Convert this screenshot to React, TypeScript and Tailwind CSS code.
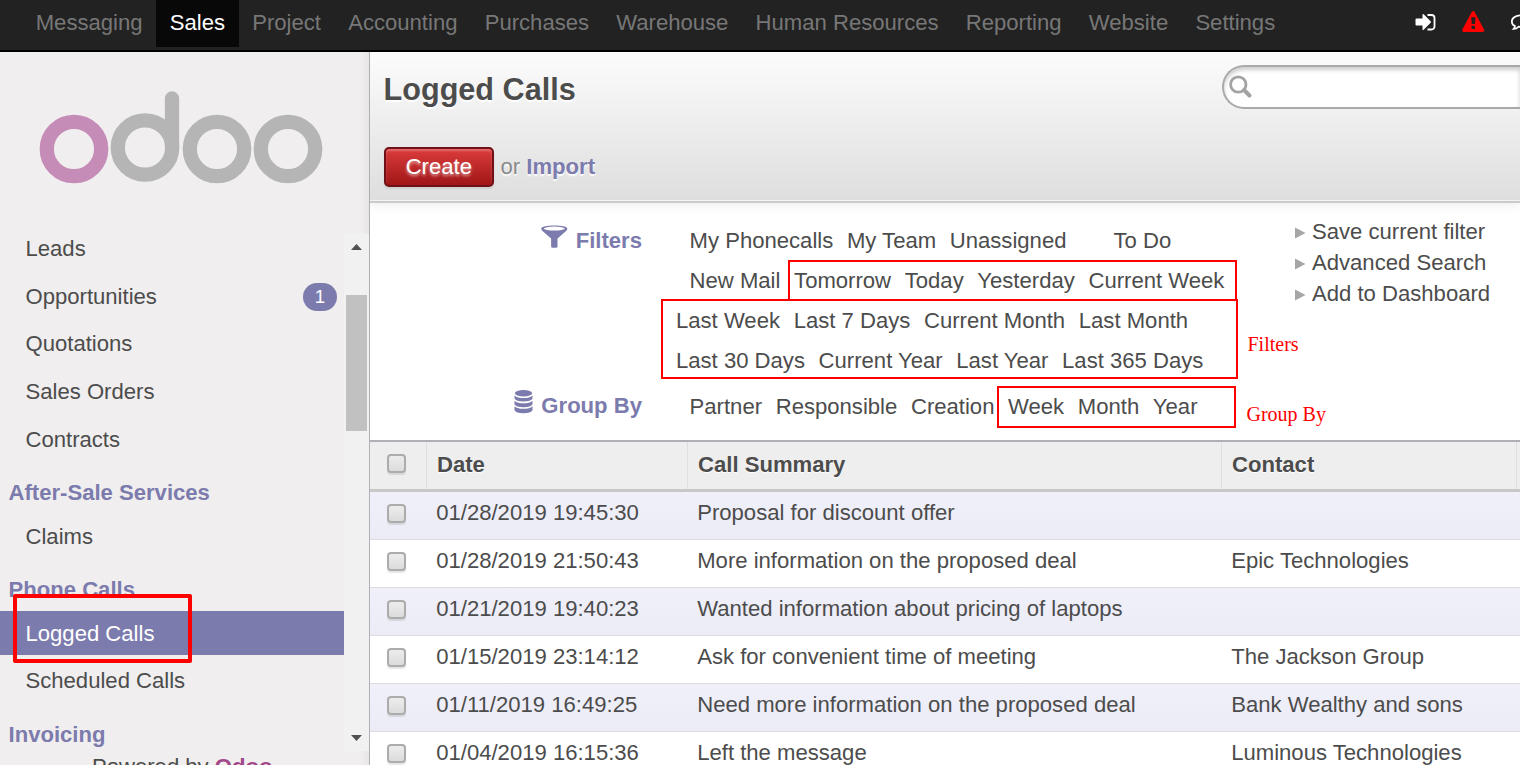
import React from "react";

const modules = [
  "Messaging", "Sales", "Project", "Accounting", "Purchases", "Warehouse",
  "Human Resources", "Reporting", "Website", "Settings",
];

type MenuEntry = { label: string; heading?: boolean; badge?: number; active?: boolean };

const menu: MenuEntry[] = [
  { label: "Leads" },
  { label: "Opportunities", badge: 1 },
  { label: "Quotations" },
  { label: "Sales Orders" },
  { label: "Contracts" },
  { label: "After-Sale Services", heading: true },
  { label: "Claims" },
  { label: "Phone Calls", heading: true },
  { label: "Logged Calls", active: true },
  { label: "Scheduled Calls" },
  { label: "Invoicing", heading: true },
];

const calls = [
  ["01/28/2019 19:45:30", "Proposal for discount offer", ""],
  ["01/28/2019 21:50:43", "More information on the proposed deal", "Epic Technologies"],
  ["01/21/2019 19:40:23", "Wanted information about pricing of laptops", ""],
  ["01/15/2019 23:14:12", "Ask for convenient time of meeting", "The Jackson Group"],
  ["01/11/2019 16:49:25", "Need more information on the proposed deal", "Bank Wealthy and sons"],
  ["01/04/2019 16:15:36", "Left the message", "Luminous Technologies"],
];

function TopBar() {
  return (
    <header className="flex h-[52px] shrink-0 items-start border-b-2 border-black bg-[#222] pl-[22.1px] text-[#777]">
      {modules.map((m) => (
        <a
          key={m}
          className={
            m === "Sales"
              ? "h-[47px] bg-[#080808] px-[13.6px] leading-[45px] text-white"
              : "h-[47px] px-[13.6px] leading-[45px]"
          }
        >
          {m}
        </a>
      ))}
      <div className="ml-auto flex h-[44px] w-[106px] items-center overflow-hidden">
        <svg className="h-[44px] w-[106px]" viewBox="1414 0 106 44">
          <path d="M1416.500 18.500h6v-3.800q.1-1.300 1.200-.5l6.900 7q.9.800 0 1.600l-6.900 7q-1.100.9-1.200-.5v-3.800h-6q-1 0-1-1v-5q0-1 1-1z" fill="#fff" />
          <path d="M1427.500 15h4a3 3 0 0 1 3 3v8.500a3 3 0 0 1-3 3h-4" fill="none" stroke="#fff" strokeWidth="1.800" />
          <path d="M1471.700 12q1.500-2.200 3 0l9.300 17.400q.8 2.300-1.500 2.600h-18.600q-2.300-.3-1.500-2.600z" fill="#f00" />
          <path d="M1471.200 17.200h4.300l-.5 6.800h-3.300zM1471.600 25.700h3.400v3.200h-3.400z" fill="#222" />
          <path d="M1522 15.200c-6 0-10.200 2.700-10.200 6.200 0 2 1.300 3.700 3.200 4.700 0 1.200-.6 2-1.500 2.900 2 0 3.700-.8 5-2.300 1 .2 2 .3 3.500.3" fill="none" stroke="#fff" strokeWidth="1.700" />
        </svg>
      </div>
    </header>
  );
}

function Logo() {
  return (
    <svg className="h-[174px] w-full shrink-0" viewBox="0 52 369 174" fill="none" strokeWidth="14.300" stroke="#b5b5b5">
      <circle cx="74" cy="149" r="27.200" stroke="#c48cb6" />
      <circle cx="145" cy="147.500" r="27.200" />
      <path d="M172 148V98.500" strokeLinecap="round" />
      <circle cx="217" cy="149" r="27.200" />
      <circle cx="288" cy="149" r="27.200" />
    </svg>
  );
}

function Sidebar() {
  return (
    <aside className="relative flex w-[370px] shrink-0 flex-col overflow-hidden border-r border-[#afafb6] bg-[#f0eeee] shadow-[inset_-8px_0_8px_-6px_rgba(0,0,0,0.06)]">
      <Logo />
      <div className="flex h-[526px] shrink-0">
        <nav className="h-full w-[344px] overflow-hidden pt-[0.7px]">
          {menu.map((e) =>
            e.heading ? (
              <h3 key={e.label} className="h-[49.55px] pl-[8.5px] pt-[6.1px] font-bold leading-[44px] text-[#7c7bad]">
                {e.label}
              </h3>
            ) : (
              <div key={e.label} className="h-[47.6px]">
                <a
                  className={
                    e.active
                      ? "flex h-[44px] items-center justify-between bg-[#7c7bad] pl-[25.5px] pr-[7px] pt-[0.2px] text-white"
                      : "flex h-[44px] items-center justify-between pl-[25.5px] pr-[7px] pt-[0.2px]"
                  }
                >
                  {e.label}
                  {e.badge && (
                    <span className="mt-px flex h-7 w-[34px] items-center justify-center rounded-[14px] bg-[#7c7bad] text-[18.7px] text-white">
                      {e.badge}
                    </span>
                  )}
                </a>
              </div>
            ),
          )}
        </nav>
        <div className="mt-2 flex h-[517px] w-[25px] flex-col items-center bg-[#f1f1f1]">
          <svg className="h-[61px] w-[11px] shrink-0" viewBox="0 0 11 61">
            <path d="M0 16l5.500-6L11 16z" fill="#505050" />
          </svg>
          <div className="h-[136px] w-[21px] shrink-0 bg-[#c1c1c1]" />
          <svg className="mt-auto h-[20px] w-[11px] shrink-0" viewBox="0 0 11 20">
            <path d="M0 4l5.500 6L11 4z" fill="#505050" />
          </svg>
        </div>
      </div>
      <footer className="pl-[92px] leading-[30px]">
        Powered by <b className="text-[#a24689]">Odoo</b>
      </footer>
      <div className="absolute left-[13px] top-[542px] h-[69px] w-[179px] rounded-[2px] border-4 border-[#f00]" />
    </aside>
  );
}

function ControlPanel() {
  return (
    <section className="relative z-10 flex h-[151px] shrink-0 justify-between border-b-2 border-[#cacaca] bg-gradient-to-b from-[#fcfcfc] to-[#dedede] shadow-[inset_0_-1px_0_#f2f2f2,0_2px_10px_rgba(0,0,0,0.08)] [text-shadow:0_1.7px_1.7px_#fff]">
      <div className="flex flex-col pl-[13.6px]">
        <h1 className="pt-[13px] text-[30.6px] font-bold leading-[48px]">Logged Calls</h1>
        <div className="mt-[34px] flex h-[40px] items-center text-[#8a8a8a]">
          <button className="h-[40px] w-[110.4px] rounded-[5px] border-2 border-[#6f1116] bg-gradient-to-b from-[#dc3b3b] to-[#a01517] pb-px text-white shadow-[inset_0_2px_2px_rgba(255,255,255,0.25),0_2px_2px_rgba(0,0,0,0.08)] [text-shadow:0_2px_3px_rgba(255,255,255,0.6)]">
            Create
          </button>
          <span className="whitespace-pre pl-[6.500px]">or <b className="text-[#7c7bad]">Import</b></span>
        </div>
      </div>
      <div className="mt-[13px] h-[44px] w-[298px] rounded-l-[22px] border-2 border-r-0 border-[#a9a9a9] bg-white shadow-[inset_0_3px_4px_rgba(0,0,0,0.2)]">
        <svg className="ml-[4px] mt-[7px] h-[26px] w-[26px]" viewBox="0 0 26 26" fill="none" stroke="#a3a3a3">
          <circle cx="10.300" cy="10.500" r="7.700" strokeWidth="2.800" />
          <path d="M16 16l5.500 5.500" strokeWidth="4" strokeLinecap="round" />
        </svg>
      </div>
    </section>
  );
}

function FilterRow({ items, className = "" }: { items: string[]; className?: string }) {
  return (
    <div className={`flex h-10 items-center gap-[13.65px] whitespace-nowrap ${className}`}>
      {items.map((i) => <span key={i}>{i}</span>)}
    </div>
  );
}

function SearchDrawer() {
  return (
    <section className="relative flex h-[237px] shrink-0 bg-white pt-[18px]">
      <div className="flex w-[272px] shrink-0 flex-col items-end font-bold text-[#7c7bad]">
        <div className="flex h-[165px] items-start leading-[40px]">
          <svg className="mr-[8px] mt-[4px] h-[24px] w-[27px]" viewBox="0 0 27 24">
            <path d="M.3 3.500C.3 1.400 6 .4 13.300.4s13 1 13 3.100c0 1.200-.5 1.800-1.500 2.700l-8.300 7.400v7.900q0 1.200-1.500 1.200h-3.400q-1.500 0-1.500-1.200v-7.900L1.800 6.200C.8 5.300.3 4.700.3 3.500z" fill="#7c7bad" />
            <ellipse cx="13.300" cy="3.600" rx="10.500" ry="2" fill="#fff" />
          </svg>
          Filters
        </div>
        <div className="flex h-10 items-start leading-[40px]">
          <svg className="mr-[8px] mt-[3px] h-[26px] w-[19px]" viewBox="0 0 19 26" fill="#7c7bad">
            <ellipse cx="9.500" cy="4.300" rx="8.700" ry="3.200" />
            <path d="M.5 6.500q3 2.600 9 2.600t9-2.600v3q-1.500 3-9 3t-9-3z" />
            <path d="M.5 11.700q3 2.600 9 2.600t9-2.600v3.500q-1.500 3-9 3t-9-3z" />
            <path d="M.5 17.200q3 2.600 9 2.600t9-2.600v4q-1.500 3-9 3t-9-3z" />
          </svg>
          Group By
        </div>
      </div>
      <div className="w-[653px] shrink-0 pl-[34px]">
        <div className="flex gap-[47px] pl-[13.6px]">
          <FilterRow items={["My Phonecalls", "My Team", "Unassigned"]} />
          <FilterRow items={["To Do"]} />
        </div>
        <FilterRow className="pl-[13.6px]" items={["New Mail", "Tomorrow", "Today", "Yesterday", "Current Week"]} />
        <FilterRow items={["Last Week", "Last 7 Days", "Current Month", "Last Month"]} />
        <FilterRow items={["Last 30 Days", "Current Year", "Last Year", "Last 365 Days"]} />
        <FilterRow className="mt-[6px] pl-[13.6px]" items={["Partner", "Responsible", "Creation", "Week", "Month", "Year"]} />
      </div>
      <ul className="-mt-[5px]">
        {["Save current filter", "Advanced Search", "Add to Dashboard"].map((t) => (
          <li key={t} className="flex h-[31px] items-center whitespace-nowrap">
            <svg className="mr-[6.500px] mt-[3px] h-[12px] w-[10.500px]" viewBox="0 0 10.500 12">
              <path d="M0 .5l10.500 5.500L0 11.500z" fill="#a6a6a6" />
            </svg>
            {t}
          </li>
        ))}
      </ul>
      <div className="absolute left-[418px] top-[57px] h-[41px] w-[449px] border-2 border-[#f00]" />
      <div className="absolute left-[291px] top-[96px] h-[80px] w-[577px] border-2 border-[#f00]" />
      <div className="absolute left-[627px] top-[183px] h-[42px] w-[239px] border-2 border-[#f00]" />
      <div className="absolute left-[877.5px] top-[129px] font-['Liberation_Serif',serif] text-[20px] leading-6 text-[#f00]">Filters</div>
      <div className="absolute left-[876.5px] top-[199px] font-['Liberation_Serif',serif] text-[20px] leading-6 text-[#f00]">Group By</div>
    </section>
  );
}

function Check() {
  return (
    <span className="block h-[19px] w-[19px] rounded-[4px] border-2 border-[#acacac] bg-gradient-to-b from-[#ececec] to-[#dcdcdc] shadow-[0_1.500px_1px_rgba(0,0,0,0.1)]" />
  );
}

function CallsTable() {
  const cols = "grid grid-cols-[57px_261px_534px_295px_1fr]";
  return (
    <section className="whitespace-nowrap">
      <div className={`${cols} h-[52px] border-b-[3px] border-t-2 border-b-[#c8c8c8] border-t-[#afafb6] bg-[#eee] font-bold leading-[45px] [text-shadow:0_1px_1px_#fff]`}>
        <div className="border-r border-[#dfdfdf] pl-[17px] pt-[12px]"><Check /></div>
        <div className="border-r border-[#dfdfdf] pl-[10px]">Date</div>
        <div className="border-r border-[#dfdfdf] pl-[10px]">Call Summary</div>
        <div className="border-r border-[#dfdfdf] pl-[10px]">Contact</div>
      </div>
      {calls.map(([date, summary, contact]) => (
        <div
          key={date}
          className={`${cols} h-12 border-b border-[#dcdce0] leading-[42px] odd:bg-white even:bg-gradient-to-b even:from-[#f0f0fa] even:to-[#ececf6]`}
        >
          <div className="pl-[17px] pt-[12px]"><Check /></div>
          <div className="pl-[9.2px]">{date}</div>
          <div className="pl-[9.2px]">{summary}</div>
          <div className="pl-[9.2px]">{contact}</div>
        </div>
      ))}
    </section>
  );
}

export default function App() {
  return (
    <div className="flex h-[765px] w-[1520px] flex-col overflow-hidden bg-white font-['Liberation_Sans',Arial,sans-serif] text-[22.1px] text-[#4c4c4c]">
      <TopBar />
      <div className="flex min-h-0 flex-1">
        <Sidebar />
        <main className="flex min-w-0 flex-1 flex-col overflow-hidden">
          <ControlPanel />
          <SearchDrawer />
          <CallsTable />
        </main>
      </div>
    </div>
  );
}
